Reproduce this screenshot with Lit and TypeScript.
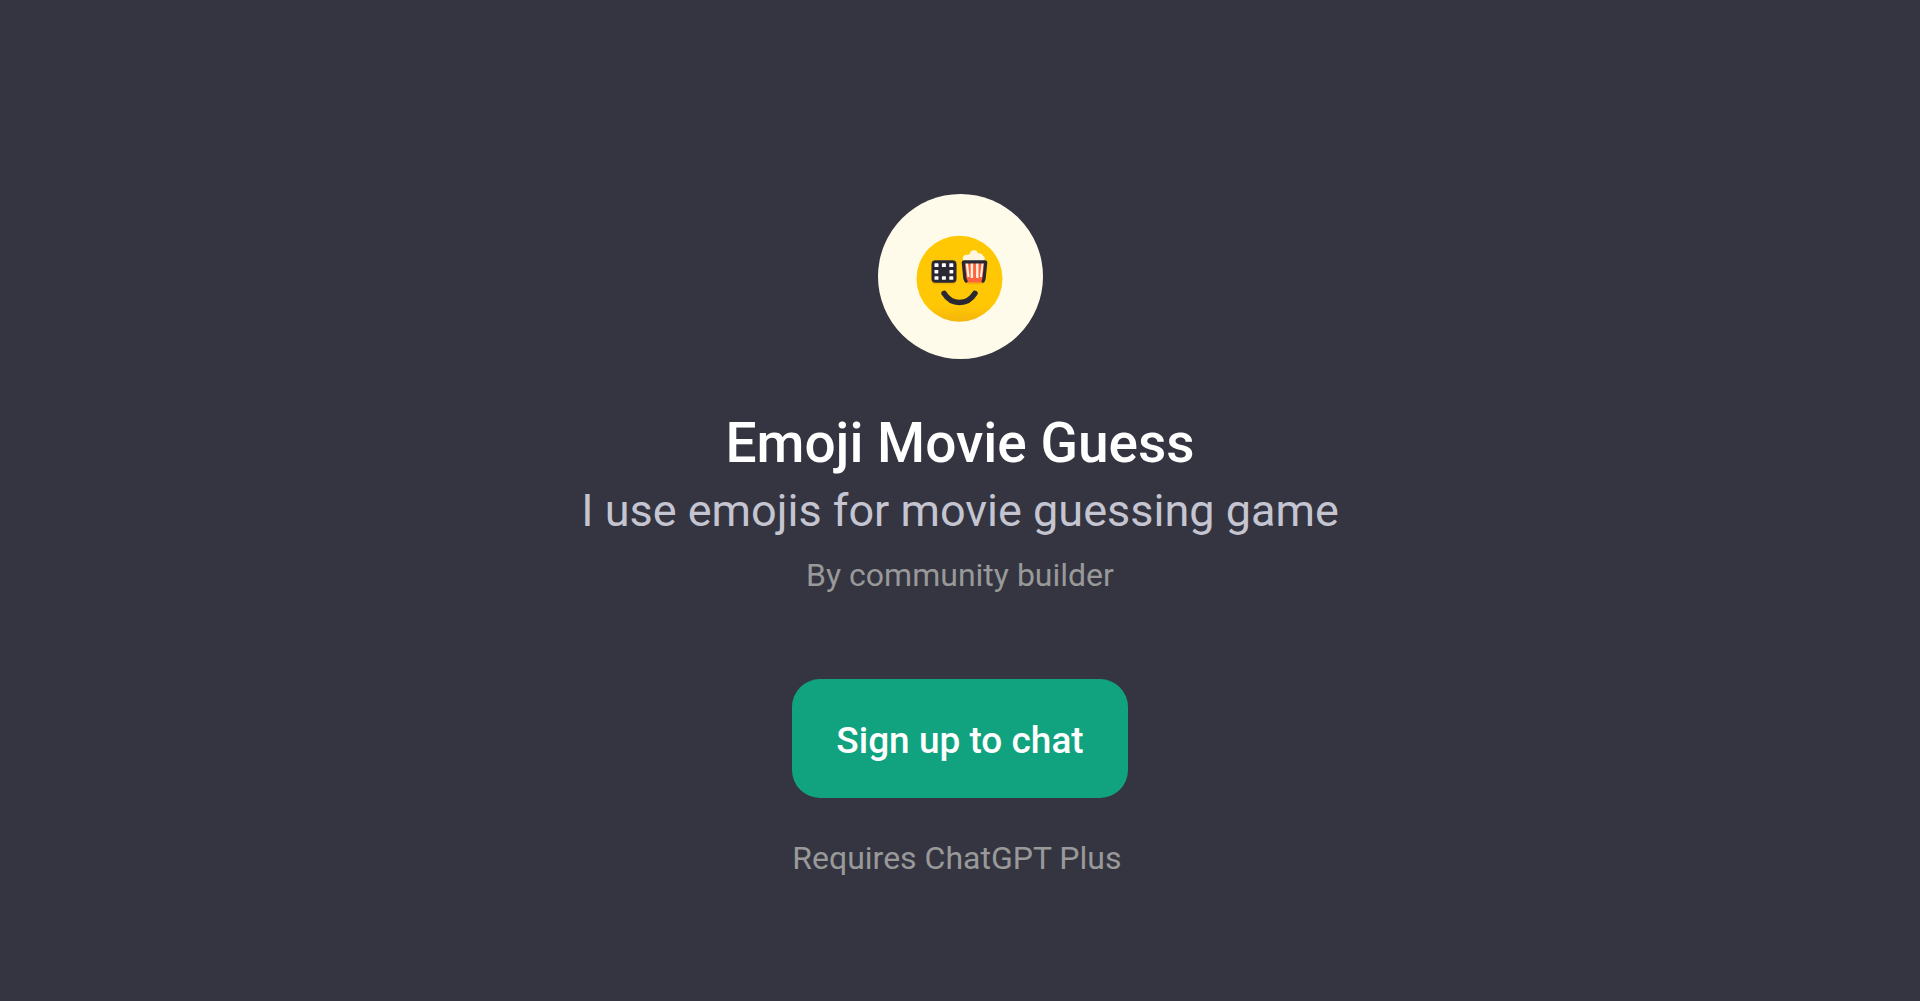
import { LitElement, html, css } from "lit";
import { customElement } from "lit/decorators.js";

@customElement("gpt-avatar")
class GptAvatar extends LitElement {
  static styles = css`
    :host {
      display: block;
    }
    .avatar {
      display: block;
      width: 165px;
      height: 165px;
    }
  `;

  render() {
    return html`
      <svg class="avatar" viewBox="877.5 194 165 165" role="img" aria-label="Emoji Movie Guess">
        <defs>
          <linearGradient id="face" x1="0" y1="0" x2="0" y2="1">
            <stop offset="0" stop-color="#ffc803" />
            <stop offset="0.82" stop-color="#ffc704" />
            <stop offset="1" stop-color="#f5b50c" />
          </linearGradient>
          <clipPath id="bucket">
            <path d="M962.5 262 H985.5 L983 282.6 H966 Z" />
          </clipPath>
        </defs>
        <circle cx="960" cy="276.5" r="82.5" fill="#fffbea" />
        <circle cx="959" cy="278.7" r="43" fill="url(#face)" />

        <rect x="931" y="262" width="25" height="22.5" rx="4" fill="#e9ac08" opacity="0.6" />
        <rect x="931" y="260.3" width="25" height="22.5" rx="4" fill="#2a2833" />
        <g fill="#fff">
          <rect x="934" y="263.3" width="4" height="3.8" rx="0.6" />
          <rect x="941.4" y="263.3" width="4" height="3.8" rx="0.6" />
          <rect x="948.8" y="263.3" width="4" height="3.8" rx="0.6" />
          <rect x="934" y="270" width="3.8" height="3.4" rx="0.6" />
          <rect x="949" y="270" width="3.8" height="3.4" rx="0.6" />
          <rect x="934" y="276.2" width="4" height="3.6" rx="0.6" />
          <rect x="941.4" y="276.2" width="4" height="3.6" rx="0.6" />
          <rect x="948.8" y="276.2" width="4" height="3.6" rx="0.6" />
        </g>

        <g fill="#fff6df">
          <circle cx="966" cy="258.3" r="3.6" />
          <circle cx="969.6" cy="257.2" r="3.2" />
          <circle cx="973.4" cy="254.2" r="4" />
          <circle cx="978.6" cy="257" r="3.8" />
          <circle cx="981" cy="258.8" r="3.2" />
          <rect x="964" y="258" width="19" height="4" />
        </g>
        <path d="M967 283.5 H982" stroke="#eeb008" stroke-width="1.6" />
        <g clip-path="url(#bucket)">
          <rect x="961" y="261" width="26" height="22" fill="#ff623c" />
          <path d="M966.2 262 L968 277" stroke="#fff3e3" stroke-width="2.2" />
          <path d="M971.4 262 V278 M976.8 262 V278" stroke="#fff3e3" stroke-width="2.4" />
          <path d="M982.2 262 L980.4 277" stroke="#fff3e3" stroke-width="2" />
        </g>
        <path
          d="M965.6 281.2 L964.4 278.6 L962.8 262.8 Q962.7 261.9 963.7 261.9 H984.3 Q985.4 261.9 985.2 262.8 L983.6 278.6 L982.6 281.2"
          fill="none"
          stroke="#2a2833"
          stroke-width="3.2"
          stroke-linecap="round"
          stroke-linejoin="round"
        />
        <path
          d="M943.6 293.4 C951 305.6 967 305.6 974.4 293.4"
          fill="none"
          stroke="#2a2833"
          stroke-width="5.6"
          stroke-linecap="round"
        />
      </svg>
    `;
  }
}

@customElement("app-root")
class AppRoot extends LitElement {
  static styles = css`
    :host {
      display: block;
      font-family: Roboto, "Liberation Sans", sans-serif;
    }
    .page {
      box-sizing: border-box;
      min-height: 100vh;
      display: flex;
      flex-direction: column;
      align-items: center;
      padding: 194px 24px 48px;
      background: #343541;
      text-align: center;
    }
    .title {
      margin: 48px 0 0;
      font-size: 55px;
      line-height: 72px;
      font-weight: 500;
      color: #fff;
    }
    .tagline {
      margin: 0;
      font-size: 45px;
      line-height: 64px;
      color: #c5c5d2;
    }
    .author {
      margin: 0;
      font-size: 32px;
      line-height: 64px;
      color: #999;
    }
    .action {
      display: flex;
      flex-direction: column;
      align-items: flex-start;
      gap: 36px;
      margin-top: 72px;
    }
    .signup {
      box-sizing: border-box;
      border: 0;
      border-radius: 28px;
      padding: 38px 44px 34px;
      background: #11a37f;
      color: #fff;
      font-family: inherit;
      font-size: 37px;
      line-height: 47px;
      font-weight: 500;
      cursor: pointer;
    }
    .note {
      margin: 0;
      font-size: 32px;
      line-height: 48px;
      color: #999;
    }
  `;

  render() {
    return html`
      <main class="page">
        <gpt-avatar></gpt-avatar>
        <h1 class="title">Emoji Movie Guess</h1>
        <p class="tagline">I use emojis for movie guessing game</p>
        <p class="author">By community builder</p>
        <div class="action">
          <button class="signup" type="button">Sign up to chat</button>
          <p class="note">Requires ChatGPT Plus</p>
        </div>
      </main>
    `;
  }
}
